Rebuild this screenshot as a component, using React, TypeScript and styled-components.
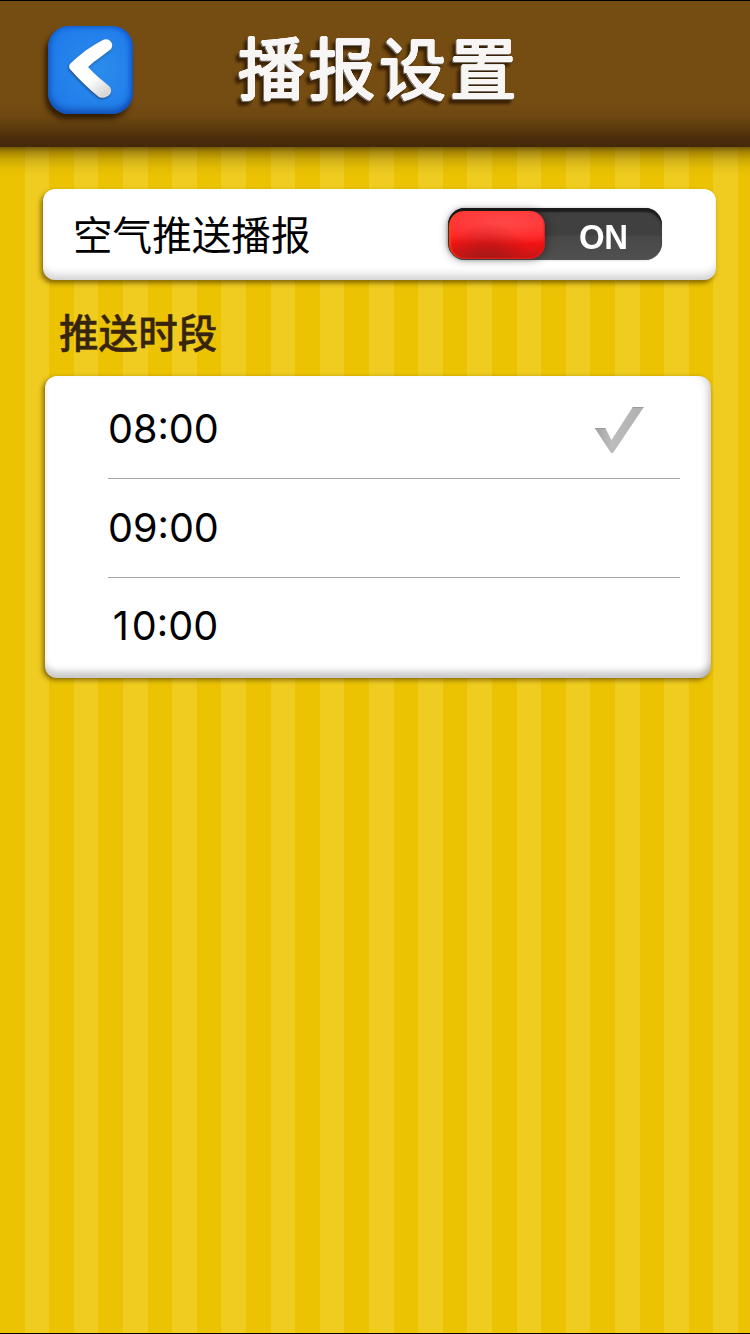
import React from "react";
import styled, { createGlobalStyle, css } from "styled-components";

const GlobalStyle = createGlobalStyle`
  * { box-sizing: border-box; }
  body {
    margin: 0;
    font-family: Inter, "Noto Sans CJK SC", sans-serif;
    color: #000;
  }
  h1, h2, ul { margin: 0; padding: 0; }
`;

const Screen = styled.div`
  width: 750px;
  height: 1334px;
  overflow: hidden;
  border-bottom: 1px solid #000;
  background: repeating-linear-gradient(
    90deg,
    #ebc303 0 24.6px,
    #efcc1f 24.6px 49.2px
  );
`;

const Header = styled.header`
  display: flex;
  align-items: flex-start;
  height: 147px;
  padding: 25px 0 0 48px;
  border-top: 1px solid #000;
  background: linear-gradient(#754d13 0 100px, #6d4711 116px, #5e3c0e 126px, #4b2c0b 138px, #452809);
`;

const HeaderShade = styled.div`
  height: 42px;
  background: linear-gradient(
    rgba(55, 35, 0, 0.66),
    rgba(70, 48, 0, 0.42) 5px,
    rgba(90, 65, 0, 0.2) 13px,
    rgba(100, 75, 0, 0.06) 21px,
    transparent 29px
  );
`;

const BackButton = styled.button`
  display: block;
  flex: none;
  width: 85px;
  height: 88px;
  padding: 0;
  border: 0;
  border-radius: 21px;
  background: radial-gradient(circle at 60% 50%, #2a8cec, #217cea 75%);
  box-shadow:
    inset 0 -5px 6px rgba(12, 60, 150, 0.55),
    inset -3px 0 5px rgba(10, 75, 210, 0.6),
    inset 3px 1px 5px rgba(15, 90, 205, 0.5),
    -3px 5px 5px rgba(40, 22, 0, 0.85);
  svg { display: block; }
`;

const outline = Array.from({ length: 12 }, (_, i) => {
  const angle = (i * Math.PI) / 6;
  return `${(Math.cos(angle) * 0.9).toFixed(2)}px ${(Math.sin(angle) * 0.9).toFixed(2)}px 0 #f8f6f4`;
}).join(", ");

const Title = styled.h1`
  margin: -5px 0 0 105px;
  font-family: "Noto Sans CJK SC", sans-serif;
  font-size: 67px;
  font-weight: 400;
  line-height: 88px;
  letter-spacing: 3.6px;
  white-space: nowrap;
  color: #f8f6f4;
  text-shadow: ${outline};
  filter: drop-shadow(-0.5px 1px 0.5px #77736c) drop-shadow(-3px 4px 1.5px #3a2104);
`;

const Card = styled.section`
  border-radius: 12px;
  background: #fff;
`;

const SwitchCard = styled(Card)`
  display: flex;
  align-items: center;
  justify-content: space-between;
  width: 673px;
  height: 91px;
  margin-left: 43px;
  padding: 0 54px 0 30px;
  box-shadow:
    inset 0 -9px 8px -4px rgba(0, 0, 0, 0.18),
    -2px 3px 5px rgba(95, 70, 0, 0.75);
`;

const Label = styled.span`
  padding-bottom: 4px;
  font-family: "Noto Sans CJK SC", sans-serif;
  font-size: 39.6px;
  line-height: 60px;
`;

const Track = styled.div`
  display: flex;
  align-items: stretch;
  width: 214px;
  height: 52px;
  margin-bottom: 1px;
  padding: 3px 1px 1px 1px;
  border-radius: 17px;
  background: linear-gradient(#404040 52%, #484848 54%, #505050);
  box-shadow:
    inset 0 4px 2px #1c1c1c,
    inset 0 0 1px 1px #555,
    -1px 0 3px rgba(0, 0, 0, 0.2);
`;

const Knob = styled.span`
  width: 96px;
  border-radius: 15px;
  background:
    radial-gradient(ellipse at 40% 100%, rgba(140, 25, 25, 0.6), transparent 52%),
    radial-gradient(ellipse 90% 45% at 60% 24%, rgba(255, 80, 80, 0.75), transparent),
    linear-gradient(#ff3434, #ff2424 50%, #ee1313 70%, #c41515);
  box-shadow:
    inset 2px 0 2px rgba(255, 70, 0, 0.7),
    inset -1px -1px 2px #e01520,
    0 0 10px rgba(0, 0, 0, 0.5);
`;

const State = styled.span`
  flex: 1;
  padding-left: 34px;
  font-family: "Liberation Sans", Arial, sans-serif;
  font-size: 35px;
  font-weight: 700;
  line-height: 51px;
  letter-spacing: -0.4px;
  transform: scaleX(0.94);
  transform-origin: 34px 0;
  color: #fff;
`;

const SectionTitle = styled.h2`
  height: 96px;
  padding: 21px 0 0 59px;
  font-family: "Noto Sans CJK SC", sans-serif;
  font-size: 39.6px;
  font-weight: 500;
  line-height: 60px;
  color: #37240f;
  -webkit-text-stroke: 0.4px #37240f;
`;

const TimeCard = styled(Card)`
  width: 666px;
  height: 302px;
  margin-left: 45.4px;
  padding: 4px 31.4px 0 62.6px;
  box-shadow:
    inset 0 -9px 6px -2px rgba(0, 0, 0, 0.2),
    inset -8px 0 8px -5px rgba(0, 0, 0, 0.18),
    -2px 2px 5px rgba(95, 70, 0, 0.75);
`;

const TimeRow = styled.div<{ $divided: boolean }>`
  display: flex;
  align-items: center;
  justify-content: space-between;
  height: ${({ $divided }) => ($divided ? 99 : 96)}px;
  padding-right: 36px;
  ${({ $divided }) => $divided && css`border-bottom: 1px solid #a5a5a5;`}
`;

const Time = styled.time<{ $narrowLead: boolean }>`
  width: 110.2px;
  font-size: 39.6px;
  line-height: 48px;
  text-align: right;
  white-space: nowrap;
  ${({ $narrowLead }) => $narrowLead && css`&::first-letter { margin-right: 3px; }`}
`;

const BackIcon = () => (
  <svg width="85" height="88" viewBox="0 0 85 88">
    <defs>
      <linearGradient id="arrow" x1="0.2" y1="0.2" x2="0.7" y2="1">
        <stop offset="0.6" stopColor="#fff" />
        <stop offset="1" stopColor="#d8d8d8" />
      </linearGradient>
      <filter id="arrowShade" x="-20%" y="-20%" width="140%" height="140%">
        <feDropShadow dx="-0.8" dy="1.4" stdDeviation="0.8" floodColor="#164b83" floodOpacity="0.9" />
      </filter>
    </defs>
    <path
      d="M55 14C60 11 67 17 63 23C56 29 47 34 40 41C46 48 54 54 61 60C67 66 59 74 51 71C41 63 31 53 22 43C21 41 21 40 22 38C32 28 43 20 55 14Z"
      fill="url(#arrow)"
      filter="url(#arrowShade)"
    />
  </svg>
);

const CheckMark = styled.svg`
  margin-top: 3px;
`;

const CheckIcon = () => (
  <CheckMark width="50" height="48" viewBox="0 0 50 48">
    <defs>
      <linearGradient id="check" x1="0" y1="0" x2="1" y2="0">
        <stop offset="0" stopColor="#a3a3a3" />
        <stop offset="0.35" stopColor="#bdbdbd" />
        <stop offset="1" stopColor="#afafaf" />
      </linearGradient>
    </defs>
    <path d="M1 21.5H11.5L17.5 33L38.5 0.5H49.5L19 46H17Z" fill="url(#check)" />
    <path d="M1 21.5H11.5M38.5 0.5H49.5" stroke="#9a9a9a" />
  </CheckMark>
);

const times = ["08:00", "09:00", "10:00"];

export default function App() {
  return (
    <>
      <GlobalStyle />
      <Screen>
        <Header>
          <BackButton aria-label="返回">
            <BackIcon />
          </BackButton>
          <Title>播报设置</Title>
        </Header>
        <HeaderShade />
        <SwitchCard>
          <Label>空气推送播报</Label>
          <Track role="switch" aria-checked="true">
            <Knob />
            <State>ON</State>
          </Track>
        </SwitchCard>
        <SectionTitle>推送时段</SectionTitle>
        <TimeCard>
          {times.map((time, i) => (
            <TimeRow key={time} $divided={i < times.length - 1}>
              <Time $narrowLead={time.startsWith("1")}>{time}</Time>
              {i === 0 && <CheckIcon />}
            </TimeRow>
          ))}
        </TimeCard>
      </Screen>
    </>
  );
}
